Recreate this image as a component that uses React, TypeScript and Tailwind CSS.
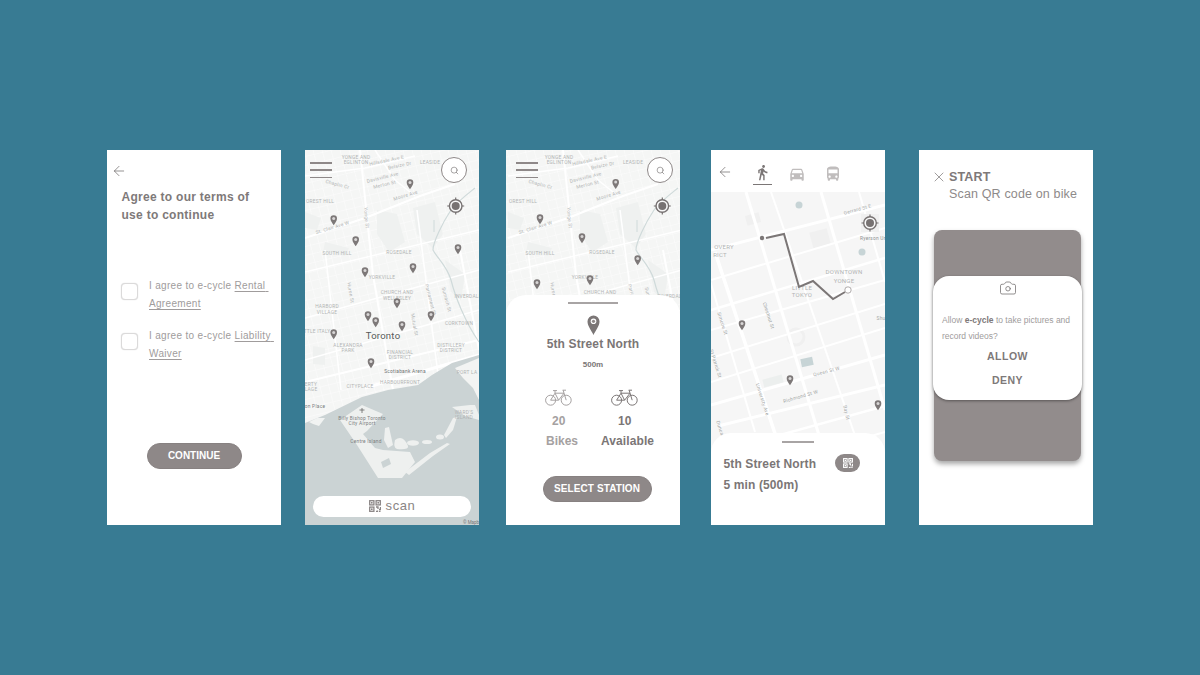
import { ArrowLeft, Camera, Search, X } from "lucide-react";
import { MdDirectionsBus, MdDirectionsCar, MdDirectionsWalk } from "react-icons/md";

const font = "font-['Liberation_Sans',sans-serif]";

const QrIcon = ({ size = 12 }: { size?: number }) => (
  <svg width={size} height={size} viewBox="0 0 12 12" fill="none" stroke="currentColor" strokeWidth="1.300">
    <rect x="0.7" y="0.7" width="4.200" height="4.200" />
    <rect x="7.100" y="0.7" width="4.200" height="4.200" />
    <rect x="0.7" y="7.100" width="4.200" height="4.200" />
    <rect x="2" y="2" width="1.600" height="1.600" fill="currentColor" stroke="none" />
    <rect x="8.400" y="2" width="1.600" height="1.600" fill="currentColor" stroke="none" />
    <rect x="2" y="8.400" width="1.600" height="1.600" fill="currentColor" stroke="none" />
    <path d="M7 7h2v2M11.500 7v2.500h-1.500M7 11.500h1.500v-1M10 11.500h1.500" />
  </svg>
);

const BikeIcon = ({ className }: { className: string }) => (
  <svg className={className} width="27" height="17" viewBox="0 0 27 17" fill="none" stroke="currentColor" strokeWidth="1">
    <circle cx="5.600" cy="11.200" r="5" />
    <circle cx="21.200" cy="11.200" r="5" />
    <path d="M5.600 11.200 10 4.200h9l2.200 7M10 4.200l3.600 7h-8M13.600 11.200 19 4.200M8 1.600h4M10 1.600v2.600M17.600 1.200h3.400M18.200 1.200l.8 3" />
  </svg>
);

const Pin = ({ x, y }: { x: number; y: number }) => (
  <g transform={`translate(${x} ${y})`}>
    <path d="M0 6.200C-1.600 3.600-3.300 1.800-3.300-.5a3.300 3.300 0 0 1 6.600 0C3.300 1.800 1.600 3.600 0 6.200Z" fill="#7d7878" />
    <circle cx="0" cy="-0.6" r="1.500" fill="#d8d6d6" />
  </g>
);

const Locate = ({ x, y }: { x: number; y: number }) => (
  <g transform={`translate(${x} ${y})`} fill="none" stroke="#777272">
    <circle r="6.300" fill="#f8f8f8" strokeWidth="1.400" />
    <circle r="4" fill="#777272" stroke="none" />
    <path d="M0-8.500v2.500M0 6v2.500M-8.500 0h2.500M6 0h2.500" strokeWidth="1.200" />
  </g>
);

const Label = ({ x, y, t, r = 0, s = 4.800, c = "#b2b4b4" }: { x: number; y: number; t: string; r?: number; s?: number; c?: string }) => (
  <text
    transform={`translate(${x} ${y}) rotate(${r})`}
    textAnchor="middle"
    fontSize={s}
    fill={c}
    letterSpacing="0.25"
    fontFamily="Roboto, sans-serif"
  >
    {t}
  </text>
);

const CityMap = ({ dx, pins }: { dx: number; pins: number[][] }) => (
  <svg className="absolute inset-0" width="174" height="375" viewBox="0 0 174 375">
    <rect width="174" height="375" fill="#f5f6f5" />
    <g transform={`translate(${dx} 0)`}>
      {/* fine street grid */}
      <g stroke="#fbfbfb" strokeWidth="0.6">
        {Array.from({ length: 30 }, (_, i) => (
          <line key={i} x1={-55 + i * 9} y1="0" x2={12 + i * 9} y2="260" />
        ))}
        {Array.from({ length: 34 }, (_, i) => (
          <line key={i} x1="-10" y1={i * 9} x2="190" y2={-48 + i * 9} />
        ))}
      </g>
      {/* parks */}
      <g fill="#eff1f0">
        <path d="M72 60 92 64 100 92 84 102 72 84Z" />
        <path d="M108 58 130 52 138 84 128 98 112 84Z" />
        <path d="M0 62 16 68 12 80 0 78Z" />
        <path d="M20 92 44 98 40 106 18 102Z" />
        <path d="M140 110 160 124 156 150 146 142Z" />
        <path d="M8 196 20 198 20 215 8 214Z" />
      </g>
      {/* main roads */}
      <g stroke="#ffffff" strokeWidth="1.500" fill="none">
        <path d="M55 0 68 125 88 240" strokeWidth="2" />
        <path d="M0 88 60 68 115 46 150 34" strokeWidth="2" />
        <path d="M0 26 60 18 110 6" />
        <path d="M70 0 90 30 110 46" />
        <path d="M0 122 174 80" />
        <path d="M0 168 174 120" />
        <path d="M0 210 174 160" />
        <path d="M0 232 174 190" strokeWidth="2" />
        <path d="M20 100 36 240" />
        <path d="M112 60 135 240" />
        <path d="M155 100 174 200" strokeWidth="2" />
        <path d="M60 238 174 205" strokeWidth="3" />
      </g>
      {/* river */}
      <path d="M170 38C160 46 152 52 146 60 138 72 128 92 128 100 132 108 142 116 146 130 150 146 160 172 174 192" fill="none" stroke="#cfdada" strokeWidth="1.200" />
      <path d="M129 70v12" stroke="#cfdada" strokeWidth="1" />
      {/* lake */}
      <path d="M0 273 20 265 57 247 83 240 113 235 127 225 147 213 174 205V375H0Z" fill="#cbd3d4" />
      <path d="M150 218 174 208V250L168 238 158 228Z" fill="#f3f4f3" />
      <path d="M4 272 12 268 20 268 14 276 8 274Z" fill="#f1f3f2" />
      {/* islands */}
      <g fill="#eef0ef">
        <path d="M35 270 57 255 78 264 62 281 58 284 70 298 78 300 105 302 110 312 97 328 73 328 52 295Z" />
        <path d="M80 278 84 277 88 295 83 298 79 290Z" />
        <path d="M90 290Q98 284 103 296 104 300 92 299 88 298 90 290Z" />
        <ellipse cx="108" cy="293" rx="6" ry="2.700" />
        <ellipse cx="122" cy="292" rx="5" ry="2" />
        <ellipse cx="135" cy="287" rx="4" ry="2.500" />
        <path d="M139 285 148 268 152 267 148 280 141 288Z" />
        <path d="M100 322 125 303 142 293 145 294 128 306 104 325Z" />
        <path d="M147 257 165 255 170 255 174 265V270L160 266Z" />
      </g>
      <path d="M76 312 84 308 86 314 78 318Z" fill="#cbd3d4" />
      <Label x={51} y={9} t="YONGE AND" />
      <Label x={51} y={14} t="EGLINTON" />
      <Label x={82} y={12} r={-12} t="Hillsdale Ave E" />
      <Label x={95} y={17} r={-12} t="Belsize Dr" />
      <Label x={78} y={29} r={-14} t="Davisville Ave" />
      <Label x={80} y={36} r={-14} t="Merton St" />
      <Label x={101} y={47} r={-17} t="Moore Ave" />
      <Label x={32} y={36} r={15} t="Chaplin Cr" />
      <Label x={125} y={14} t="LEASIDE" />
      <Label x={15} y={53} t="OREST HILL" />
      <Label x={60} y={68} r={85} t="Yonge St" />
      <Label x={28} y={79} r={-17} t="St. Clair Ave W" />
      <Label x={32} y={105} t="SOUTH HILL" />
      <Label x={94} y={104} t="ROSEDALE" />
      <Label x={77} y={129} t="YORKVILLE" />
      <Label x={44} y={143} r={80} t="Huron St" />
      <Label x={92} y={144} t="CHURCH AND" />
      <Label x={92} y={150} t="WELLESLEY" />
      <Label x={124} y={150} r={75} t="Parliament St" />
      <Label x={140} y={150} r={75} t="Sumach St" />
      <Label x={163} y={148} t="INVERDALE" />
      <Label x={22} y={158} t="HARBORD" />
      <Label x={22} y={164} t="VILLAGE" />
      <Label x={108} y={175} r={80} t="Mutual St" />
      <Label x={154} y={175} t="CORKTOWN" />
      <Label x={12} y={183} t="TTLE ITALY" />
      <Label x={43} y={197} t="ALEXANDRA" />
      <Label x={43} y={202} t="PARK" />
      <Label x={95} y={204} t="FINANCIAL" />
      <Label x={95} y={209} t="DISTRICT" />
      <Label x={146} y={197} t="DISTILLERY" />
      <Label x={146} y={202} t="DISTRICT" />
      <Label x={100} y={223} t="Scotiabank Arena" c="#6f7373" />
      <Label x={162} y={224} t="PORT LA" />
      <Label x={55} y={238} t="CITYPLACE" />
      <Label x={95} y={234} t="HARBOURFRONT" />
      <Label x={6} y={236} t="ERTY" />
      <Label x={6} y={241} t="LAGE" />
      <Label x={10} y={258} t="on Place" c="#7b7f7f" />
      <Label x={57} y={270} t="Billy Bishop Toronto" c="#7b7f7f" />
      <Label x={57} y={275} t="City Airport" c="#7b7f7f" />
      <Label x={61} y={293} t="Centre Island" c="#7b7f7f" />
      <Label x={159} y={264} t="WARD'S" />
      <Label x={159} y={269} t="ISLAND" />
      <Label x={78} y={189} s={9.500} t="Toronto" c="#555858" />
      <path d="M57 258v5M54.500 260h5" stroke="#666" strokeWidth="0.8" />
    </g>
    {pins.map(([x, y]) => (
      <Pin key={`${x}-${y}`} x={x} y={y} />
    ))}
    <text x="158" y="374" fontSize="4.500" fill="#777" fontFamily="Roboto, sans-serif">© Mapb</text>
  </svg>
);

const NearbyMap = () => (
  <svg className="absolute inset-0" width="174" height="333" viewBox="0 0 174 333">
    <rect width="174" height="333" fill="#f6f6f6" />
    <rect x="35" y="22" width="14" height="10" fill="#f0f0f0" transform="rotate(-15 42 27)" />
    <rect x="100" y="38" width="18" height="16" fill="#f0f0f0" transform="rotate(-15 110 46)" />
    <circle cx="88" cy="13" r="3.500" fill="#c7d4d6" />
    <circle cx="151" cy="60" r="3.500" fill="#c7d4d6" />
    <rect x="90" y="166" width="12" height="8" fill="#c7d4d6" transform="rotate(-12 96 170)" />
    <rect x="52" y="185" width="20" height="8" fill="#ecefee" transform="rotate(-15 62 189)" />
    <circle cx="85" cy="145" r="8" fill="none" stroke="#f0f0f0" strokeWidth="3" />
    <g stroke="#ffffff" strokeWidth="2">
      <path d="M0 58 174 13" strokeWidth="3" />
      <path d="M0 88 174 36" />
      <path d="M0 118 174 66" strokeWidth="2.500" />
      <path d="M0 138 174 88" />
      <path d="M0 166 174 112" />
      <path d="M0 190 174 136" />
      <path d="M0 213 174 163" strokeWidth="3" />
      <path d="M7 234 174 193" strokeWidth="3" />
      <path d="M0 262 174 214" strokeWidth="2.500" />
      <path d="M0 290 174 240" />
      <path d="M35 0 122 290" strokeWidth="3" />
      <path d="M4 60 80 290" strokeWidth="3.500" />
      <path d="M-2 85 44 240" strokeWidth="2" />
      <path d="M60 0 160 290" strokeWidth="2" />
      <path d="M110 0 174 218" strokeWidth="3" />
      <path d="M148 0 174 90" strokeWidth="2" />
    </g>
    <rect x="150" y="22" width="18" height="18" fill="#f0f0f0" />
    <Label x={13} y={57} s={6} t="OVERY" />
    <Label x={9} y={65} s={6} t="RICT" />
    <Label x={133} y={82} s={6} t="DOWNTOWN" />
    <Label x={133} y={91} s={6} t="YONGE" />
    <Label x={91} y={98} s={6} t="LITTLE" />
    <Label x={91} y={105} s={6} t="TOKYO" />
    <Label x={147} y={19} r={-15} t="Gerrard St E" c="#a3a6a6" />
    <Label x={163} y={48} t="Ryerson Uni" c="#8f9393" />
    <Label x={56} y={124} r={72} t="Chestnut St" c="#a3a6a6" />
    <Label x={10} y={132} r={72} t="Simcoe St" c="#a3a6a6" />
    <Label x={3} y={172} r={72} t="St Patrick St" c="#a3a6a6" />
    <Label x={50} y={208} r={72} t="University Ave" c="#a3a6a6" />
    <Label x={116} y={181} r={-15} t="Queen St W" c="#a3a6a6" />
    <Label x={90} y={206} r={-16} t="Richmond St W" c="#a3a6a6" />
    <Label x={134} y={221} r={76} t="Bay St" c="#a3a6a6" />
    <Label x={8} y={238} r={72} t="Duncan" c="#a3a6a6" />
    <Label x={170} y={128} t="Shu" c="#a3a6a6" />
    <Locate x={159} y={31} />
    <Pin x={31} y={132} />
    <Pin x={79} y={187} />
    <Pin x={167} y={212} />
    <path d="M55 46 73 42 88 95 102 89 122 107 134 100" fill="none" stroke="#7b7676" strokeWidth="2" />
    <circle cx="51" cy="46" r="2.200" fill="#7b7676" />
    <circle cx="137" cy="98" r="3.200" fill="#ffffff" stroke="#8e8888" strokeWidth="0.700" />
  </svg>
);

const Hamburger = ({ className }: { className: string }) => (
  <div className={`absolute top-[12px] flex h-[16px] w-[22px] flex-col justify-between ${className}`}>
    <div className="h-[1.500px] bg-[#8e8888]" />
    <div className="h-[1.500px] bg-[#8e8888]" />
    <div className="h-[1.500px] bg-[#8e8888]" />
  </div>
);

const SearchButton = ({ className }: { className: string }) => (
  <div className={`absolute top-[7px] flex h-[26px] w-[26px] items-center justify-center rounded-full border-[1.300px] border-[#8e8888] bg-white ${className}`}>
    <Search size={9} strokeWidth={1.600} className="text-[#6f6b6b]" />
  </div>
);

const Handle = ({ className }: { className: string }) => <div className={`mx-auto h-[1.500px] bg-[#a8a4a4] ${className}`} />;

const Phone = ({ className = "", children }: { className?: string; children?: React.ReactNode }) => (
  <div className={`relative flex h-[375px] w-[174px] shrink-0 flex-col overflow-hidden bg-white ${className}`}>{children}</div>
);

const Term = ({ doc, last }: { doc: string; last: string }) => (
  <div className="flex items-start">
    <div className="mt-[6px] ml-[14px] h-[17px] w-[17px] rounded-[4px] border border-[#dbdada] bg-white shadow-[0_0_1px_#ccc]" />
    <p className="ml-[11px] text-[10px] leading-[18.300px] tracking-[0.32px] whitespace-pre text-[#a09c9c]">
      I agree to e-cycle <span className="underline underline-offset-2">{doc} </span>
      <br />
      <span className="underline underline-offset-2">{last}</span>
    </p>
  </div>
);

export default function App() {
  return (
    <div className={`flex h-[675px] w-[1200px] bg-[#387b93] pt-[150px] pl-[107px] ${font}`}>
      <Phone>
        <ArrowLeft size={16} strokeWidth={1.100} className="mt-[13px] ml-[4px] text-[#6f6b6b]" />
        <h1 className="mt-[8.500px] ml-[14.500px] text-[12px] leading-[18.300px] font-bold tracking-[0.28px] text-[#7e7979]">
          Agree to our terms of
          <br />
          use to continue
        </h1>
        <div className="mt-[53px] flex flex-col gap-[13.500px]">
          <Term doc="Rental" last="Agreement" />
          <Term doc="Liability" last="Waiver" />
        </div>
        <button className="mx-auto mt-[79px] h-[26px] w-[95px] rounded-full border border-[#878181] bg-[#8e8888] text-[10px] font-bold text-white">CONTINUE</button>
      </Phone>

      <Phone className="ml-[24px]">
        <CityMap
          dx={0}
          pins={[[105, 33], [28.700, 69], [50.700, 90], [153, 98], [60, 121], [108, 117], [92, 152], [63, 165], [70.700, 171], [97, 175], [126, 165], [28.700, 183], [66, 212]]}
        />
        <svg className="absolute inset-0" width="174" height="80" viewBox="0 0 174 80">
          <Locate x={150.700} y={56} />
        </svg>
        <Hamburger className="left-[5px]" />
        <SearchButton className="left-[136px]" />
        <div className="relative mx-[8px] mt-[346px] flex h-[21px] items-center justify-center gap-[5px] rounded-full bg-white pb-[1px] text-[#8a8585]">
          <QrIcon />
          <span className="text-[13px] leading-[16px] tracking-[0.6px]">scan</span>
        </div>
      </Phone>

      <Phone className="ml-[27px]">
        <CityMap dx={2} pins={[[109.700, 32.700], [34, 68], [76, 87], [131.700, 109], [31, 133], [84, 129]]} />
        <svg className="absolute inset-0" width="174" height="80" viewBox="0 0 174 80">
          <Locate x={156.300} y={56} />
        </svg>
        <Hamburger className="left-[10px]" />
        <SearchButton className="left-[141px]" />
        <div className="relative mt-[145px] flex h-[230px] flex-col items-center rounded-t-[20px] bg-white pt-[7px]">
          <Handle className="w-[50px]" />
          <svg className="mt-[11px]" width="13" height="20" viewBox="0 0 13 20">
            <path d="M6.500 20C4.500 15.500.5 11 .5 6.500a6 6 0 0 1 12 0C12.500 11 8.500 15.500 6.500 20Z" fill="#7b7676" />
            <circle cx="6.500" cy="6.300" r="2.800" fill="#ffffff" />
            <circle cx="6.500" cy="6.300" r="1.600" fill="#8e8888" />
          </svg>
          <h2 className="text-[12px] leading-[18px] font-bold tracking-[0.12px] text-[#7b7676]">5th Street North</h2>
          <p className="mt-[7px] text-[8px] leading-[10px] font-bold text-[#7b7676]">500m</p>
          <div className="mt-[19px] flex w-full pl-[32px]">
            <div className="flex w-[66px] flex-col">
              <BikeIcon className="ml-[7px] text-[#a5a1a1]" />
              <span className="mt-[7px] ml-[14px] text-[12px] leading-[16px] font-bold text-[#a5a1a1]">20</span>
              <span className="mt-[4px] ml-[8px] text-[12px] leading-[16px] font-bold text-[#a5a1a1]">Bikes</span>
            </div>
            <div className="flex flex-col">
              <BikeIcon className="ml-[7px] text-[#7b7676]" />
              <span className="mt-[7px] ml-[14px] text-[12px] leading-[16px] font-bold text-[#7b7676]">10</span>
              <span className="mt-[4px] ml-[-3px] text-[12px] leading-[16px] font-bold tracking-[0.1px] whitespace-nowrap text-[#7b7676]">Available</span>
            </div>
          </div>
          <button className="mt-[27px] ml-[8px] h-[26px] w-[109px] rounded-full border border-[#878181] bg-[#8e8888] text-[10px] font-bold tracking-[0.1px] text-white">SELECT STATION</button>
        </div>
      </Phone>

      <Phone className="ml-[31px]">
        <div className="relative z-10 flex h-[42px] items-start bg-white">
          <ArrowLeft size={16} strokeWidth={1.100} className="mt-[14px] ml-[6px] text-[#6f6b6b]" />
          <div className="mt-[14px] ml-[20px] flex h-[20.500px] w-[19px] justify-center border-b-[1.500px] border-[#7b7676]">
            <MdDirectionsWalk size={17} className="text-[#7b7676]" />
          </div>
          <MdDirectionsCar size={18} className="mt-[15px] ml-[16px] text-[#c0bdbd]" />
          <MdDirectionsBus size={18} className="mt-[14.500px] ml-[18px] text-[#c0bdbd]" />
        </div>
        <div className="relative flex-1">
          <NearbyMap />
        </div>
        <div className="absolute inset-x-0 bottom-0 h-[92px] rounded-t-[20px] bg-white">
          <Handle className="mt-[8px] w-[32px]" />
          <div className="mt-[11px] flex">
            <div className="ml-[12.500px] text-[12px] leading-[21.500px] font-bold tracking-[0.12px] text-[#7b7676]">
              5th Street North
              <br />
              5 min (500m)
            </div>
            <div className="ml-[19px] flex h-[18px] w-[25px] items-center justify-center rounded-full bg-[#8e8888] text-white">
              <QrIcon size={10} />
            </div>
          </div>
        </div>
      </Phone>

      <Phone className="ml-[34px]">
        <div className="mt-[19px] flex items-start">
          <X size={16} strokeWidth={1} className="ml-[11.500px] text-[#6f6b6b]" />
          <div className="ml-[2.500px]">
            <h2 className="mt-[1px] text-[12.500px] leading-[15px] font-bold tracking-[0.15px] text-[#7e7979]">START</h2>
            <p className="mt-[1.500px] text-[12.500px] leading-[15px] tracking-[0.15px] whitespace-nowrap text-[#8e8a8a]">Scan QR code on bike</p>
          </div>
        </div>
        <div className="mt-[28px] mr-[12px] ml-[15px] flex h-[231px] flex-col justify-start rounded-[8px] bg-[#928c8c] pt-[46px] shadow-[0_3px_5px_rgba(0,0,0,0.35)]">
          <div className="mx-[-1px] flex h-[124px] flex-col rounded-[16px] bg-white shadow-[0_1px_3px_rgba(0,0,0,0.4)]">
            <Camera size={18} strokeWidth={1} className="mx-auto mt-[3px] text-[#6f6b6b]" />
            <p className="mt-[15px] ml-[9px] text-[8.500px] leading-[16.300px] whitespace-nowrap text-[#a09c9c]">
              Allow <b className="text-[#7e7979]">e-cycle</b> to take pictures and
              <br />
              record videos?
            </p>
            <p className="mt-[5px] text-center text-[10.500px] leading-[14px] font-bold tracking-[0.5px] text-[#7e7979]">ALLOW</p>
            <p className="mt-[10px] text-center text-[10.500px] leading-[14px] font-bold tracking-[0.5px] text-[#7e7979]">DENY</p>
          </div>
        </div>
      </Phone>
    </div>
  );
}
